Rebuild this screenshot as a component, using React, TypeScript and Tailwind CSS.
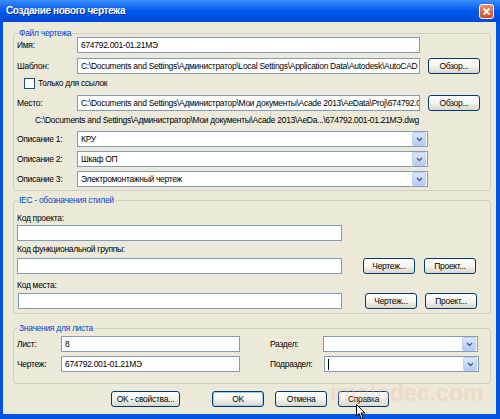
import React from "react";

const field = "h-[16px] border border-[#7F9DB9] bg-white flex items-center text-black whitespace-nowrap overflow-hidden";

function Input({ className = "", children }: { className?: string; children?: React.ReactNode }) {
  return <div className={`${field} px-[3px] ${className}`}>{children}</div>;
}

function Combo({ className = "", children }: { className?: string; children?: React.ReactNode }) {
  return (
    <div className={`${field} ${className}`}>
      <div className="flex-1 px-[3px] overflow-hidden flex items-center">{children}</div>
      <div className="mr-px flex h-[14px] w-[14px] items-center justify-center rounded-[2px] border border-[#BACCF4] bg-gradient-to-b from-[#DCE7FD] to-[#B4CAF6]">
        <svg width="7" height="5" viewBox="0 0 7 5">
          <path d="M1 1 L3.5 3.5 L6 1" stroke="#4D6185" strokeWidth="1.4" fill="none" />
        </svg>
      </div>
    </div>
  );
}

function Btn({ className = "", children }: { className?: string; children: React.ReactNode }) {
  return (
    <div
      className={`flex h-[16px] items-center justify-center whitespace-nowrap rounded-[3px] border border-[#003C74] bg-gradient-to-b from-white via-[#F5F4EF] to-[#DAD6CB] text-black ${className}`}
    >
      {children}
    </div>
  );
}

function Group({ title, className = "", children }: { title: string; className?: string; children: React.ReactNode }) {
  return (
    <div className={`relative ml-[10px] w-[478px] rounded-[3px] border border-[#D0D0BF] ${className}`}>
      <span className="absolute left-[4px] top-[-7px] bg-[#ECE9D8] px-[1px] leading-[12px] text-[#0046D5]">{title}</span>
      {children}
    </div>
  );
}

export default function App() {
  return (
    <div className="relative flex h-[419px] w-[500px] flex-col overflow-hidden bg-[#0055E5] font-['Liberation_Sans',Arial,sans-serif] text-[8.5px] leading-[12px] tracking-[-0.3px] text-black">
      {/* title bar */}
      <div className="flex h-[22px] shrink-0 items-center justify-between bg-gradient-to-b from-[#3A8CFB] via-[#0058EE] to-[#0049D6] pl-[6px] pr-[6px]">
        <span className="text-[10px] font-bold tracking-[-0.4px] text-white [text-shadow:1px_1px_0_#0A2C8F]">Создание нового чертежа</span>
        <div className="flex h-[15px] w-[15px] items-center justify-center rounded-[3px] border border-white bg-gradient-to-b from-[#E98F70] to-[#D8481F]">
          <svg width="9" height="9" viewBox="0 0 9 9">
            <path d="M1.5 1.5 L7.5 7.5 M7.5 1.5 L1.5 7.5" stroke="white" strokeWidth="1.8" />
          </svg>
        </div>
      </div>

      {/* client area */}
      <div className="ml-[3px] mr-[4px] mb-[5px] flex-1 bg-[#ECE9D8]">
        <Group title="Файл чертежа" className="mt-[11px] h-[158px]">
          <div className="pl-[3px] pt-[3px]">
            <div className="flex h-[16px] items-center">
              <span className="w-[60px]">Имя:</span>
              <Input className="w-[343px]">674792.001-01.21МЭ</Input>
            </div>
            <div className="mt-[5px] flex h-[16px] items-center">
              <span className="w-[60px]">Шаблон:</span>
              <Input className="w-[343px]">
                C:\Documents and Settings\Администратор\Local Settings\Application Data\Autodesk\AutoCAD
              </Input>
              <Btn className="ml-[8px] w-[52px]">Обзор...</Btn>
            </div>
            <div className="mt-[3px] flex h-[12px] items-center pl-[7px]">
              <div className="h-[11px] w-[11px] border border-[#1C5180] bg-white" />
              <span className="ml-[3px]">Только для ссылок</span>
            </div>
            <div className="mt-[6px] flex h-[16px] items-center">
              <span className="w-[60px]">Место:</span>
              <Input className="w-[343px]">
                C:\Documents and Settings\Администратор\Мои документы\Acade 2013\AeData\Proj\674792.0
              </Input>
              <Btn className="ml-[8px] w-[52px]">Обзор...</Btn>
            </div>
            <div className="mt-[2px] flex h-[13px] items-center whitespace-nowrap pl-[18px]">
              C:\Documents and Settings\Администратор\Мои документы\Acade 2013\AeDa...\674792.001-01.21МЭ.dwg
            </div>
            <div className="mt-[5px] flex h-[16px] items-center">
              <span className="w-[60px]">Описание 1:</span>
              <Combo className="w-[351px]">КРУ</Combo>
            </div>
            <div className="mt-[4px] flex h-[16px] items-center">
              <span className="w-[60px]">Описание 2:</span>
              <Combo className="w-[351px]">Шкаф ОП</Combo>
            </div>
            <div className="mt-[4px] flex h-[16px] items-center">
              <span className="w-[60px]">Описание 3:</span>
              <Combo className="w-[351px]">Электромонтажный чертеж</Combo>
            </div>
          </div>
        </Group>

        <Group title="IEC - обозначения стилей" className="mt-[9px] h-[114px]">
          <div className="pl-[3px]">
            <div className="mt-[11px] h-[12px]">Код проекта:</div>
            <Input className="mt-px w-[325px]" />
            <div className="mt-[2px] h-[12px]">Код функциональной группы:</div>
            <div className="mt-[3px] flex h-[16px] items-center">
              <Input className="w-[325px]" />
              <Btn className="ml-[21px] w-[52px]">Чертеж...</Btn>
              <Btn className="ml-[9px] w-[52px]">Проект...</Btn>
            </div>
            <div className="mt-[5px] h-[12px]">Код места:</div>
            <div className="mt-[2px] flex h-[16px] items-center">
              <Input className="ml-px w-[324px]" />
              <Btn className="ml-[23px] w-[52px]">Чертеж...</Btn>
              <Btn className="ml-[8px] w-[52px]">Проект...</Btn>
            </div>
          </div>
        </Group>

        <Group title="Значения для листа" className="mt-[14px] h-[56px]">
          <div className="pl-[3px] pt-[7px]">
            <div className="flex h-[16px] items-center">
              <span className="w-[44px]">Лист:</span>
              <Input className="w-[179px]">8</Input>
              <span className="ml-[30px] w-[53px]">Раздел:</span>
              <Combo className="w-[155px]" />
            </div>
            <div className="mt-[4px] flex h-[16px] items-center">
              <span className="w-[44px]">Чертеж:</span>
              <Input className="w-[179px]">674792.001-01.21МЭ</Input>
              <span className="ml-[30px] w-[54px]">Подраздел:</span>
              <Combo className="w-[155px]">
                <div className="h-[11px] w-px bg-black" />
              </Combo>
            </div>
          </div>
        </Group>

        <div className="mt-[7px] flex h-[16px] items-center pl-[108px]">
          <Btn className="w-[69px]">OK - свойства...</Btn>
          <Btn className="ml-[32px] w-[52px] border-[#1F3F9A] shadow-[inset_0_0_0_1px_#A8C4F5]">OK</Btn>
          <Btn className="ml-[11px] w-[52px]">Отмена</Btn>
          <Btn className="ml-[11px] w-[51px]">Справка</Btn>
        </div>
      </div>

      {/* watermark */}
      <span className="pointer-events-none absolute left-[330px] top-[380px] text-[23px] font-bold leading-[26px] tracking-normal text-[#F0B8A8] opacity-30">
        imalodec.com
      </span>

      {/* mouse pointer */}
      <svg className="pointer-events-none absolute left-[356px] top-[404px]" width="10" height="16" viewBox="0 0 10 16">
        <path d="M0.5 0.5 L0.5 12 L3.2 9.5 L5.2 14.5 L7 13.7 L5 9 L8.8 9 Z" fill="white" stroke="black" strokeWidth="1" />
      </svg>
    </div>
  );
}
